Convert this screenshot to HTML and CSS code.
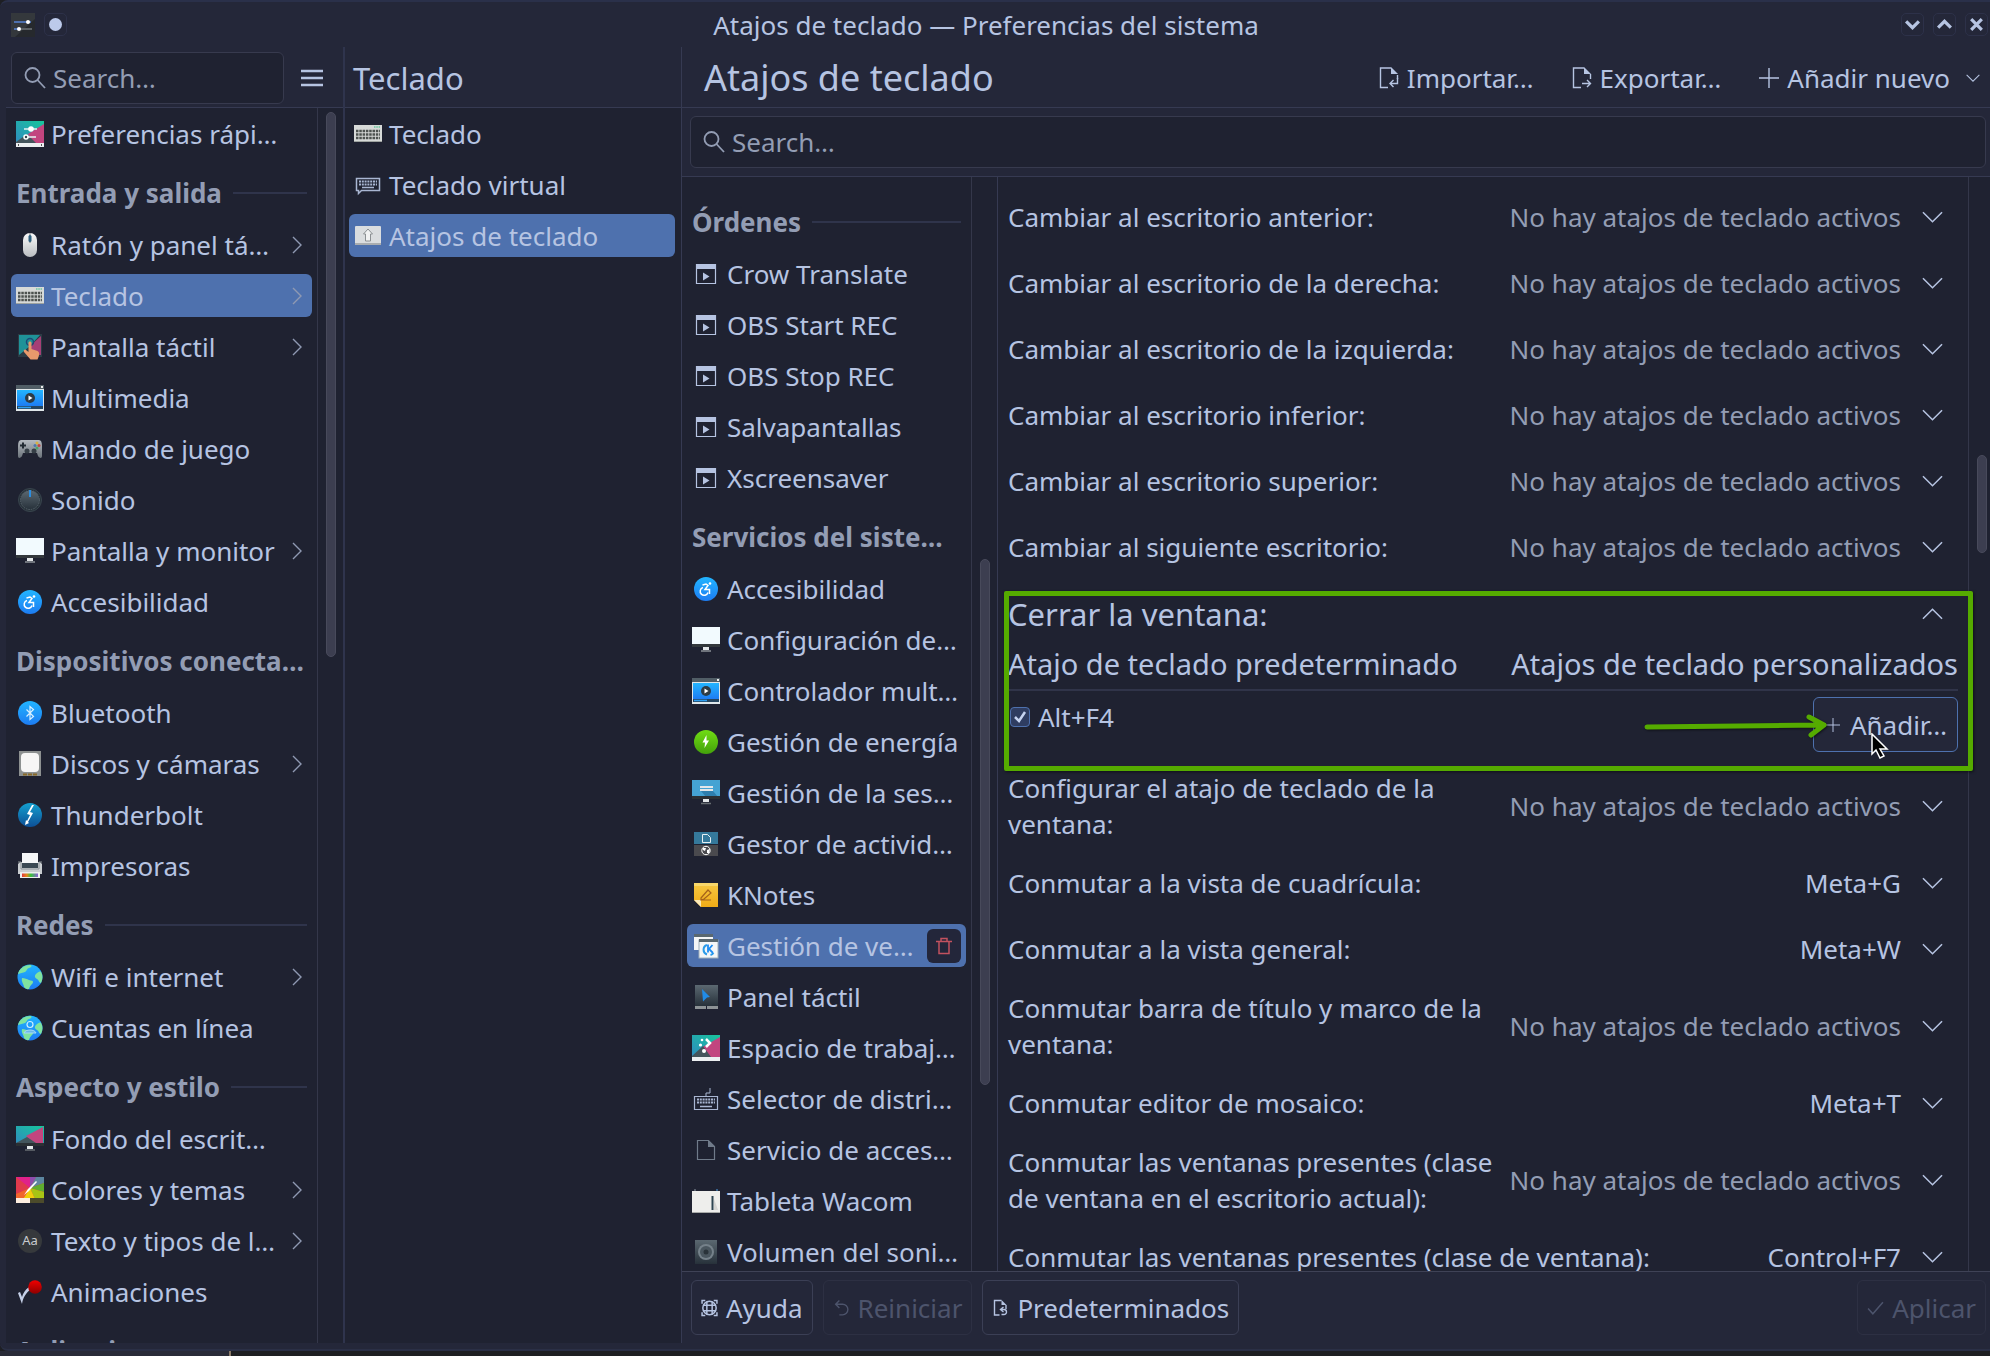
FILE: index.html
```html
<!DOCTYPE html>
<html lang="es">
<head>
<meta charset="utf-8">
<title>Atajos de teclado — Preferencias del sistema</title>
<link rel="stylesheet" href="styles.css">
</head>
<body>
<svg class="sprite" aria-hidden="true">
  <defs>
    <linearGradient id="g-blue" x1="0" y1="0" x2="0" y2="1"><stop offset="0" stop-color="#22b5ff"/><stop offset="1" stop-color="#1d7cf2"/></linearGradient>
    <linearGradient id="g-thunder" x1="0" y1="0" x2="0" y2="1"><stop offset="0" stop-color="#14a0cf"/><stop offset="1" stop-color="#0d4f96"/></linearGradient>
    <linearGradient id="g-green" x1="0" y1="0" x2="0" y2="1"><stop offset="0" stop-color="#70dc14"/><stop offset="1" stop-color="#43a10b"/></linearGradient>
    <linearGradient id="g-red" x1="0" y1="0" x2="0" y2="1"><stop offset="0" stop-color="#f20000"/><stop offset="1" stop-color="#8d0000"/></linearGradient>
    <linearGradient id="g-steel" x1="0" y1="0" x2="0" y2="1"><stop offset="0" stop-color="#5b6871"/><stop offset="1" stop-color="#27313a"/></linearGradient>
    <linearGradient id="g-silver" x1="0" y1="0" x2="0" y2="1"><stop offset="0" stop-color="#fbfbfb"/><stop offset="1" stop-color="#b9bdc0"/></linearGradient>
    <linearGradient id="g-note" x1="0" y1="0" x2="0" y2="1"><stop offset="0" stop-color="#f6c842"/><stop offset="1" stop-color="#efab17"/></linearGradient>
    <linearGradient id="g-teal" x1="0" y1="1" x2="1" y2="0"><stop offset="0" stop-color="#2f8cc0"/><stop offset="1" stop-color="#17c69b"/></linearGradient>
    <linearGradient id="g-pad" x1="0" y1="0" x2="0" y2="1"><stop offset="0" stop-color="#b4bac0"/><stop offset="1" stop-color="#6b737a"/></linearGradient>
    <linearGradient id="g-rainbow" x1="0" y1="0" x2="1" y2="0"><stop offset="0" stop-color="#e0383c"/><stop offset=".3" stop-color="#e28a1c"/><stop offset=".55" stop-color="#35c23c"/><stop offset="1" stop-color="#8e5fd8"/></linearGradient>
  </defs>
  <symbol id="i-app" viewBox="0 0 26 26"><rect x="1" y="1" width="24" height="24" fill="#34383c"/><path d="M5 25 25 7v18z" fill="#26292d"/><path d="M4 10h17" stroke="#4d70ae" stroke-width="2"/><path d="M4 17h5" stroke="#4d70ae" stroke-width="2"/><path d="M10 17h12" stroke="#5d6266" stroke-width="2"/><circle cx="18" cy="10" r="2" fill="#fff"/><circle cx="9" cy="17" r="2" fill="#fff"/></symbol>
  <symbol id="i-quick" viewBox="0 0 28 28"><rect y="1" width="28" height="22" fill="url(#g-teal)"/><path d="M28 4v19H17L12 14z" fill="#c2457f"/><path d="M0 22 11 14l9 9H0z" fill="#44555c"/><rect y="23" width="28" height="4" fill="#eceff1"/><path d="M8 9h13M8 17h12" stroke="#e7f1f2" stroke-width="1.500"/><circle cx="15" cy="9" r="2.800" fill="#fff"/><circle cx="10" cy="17" r="2" fill="#33474d" stroke="#fff" stroke-width="1.500"/><path d="M2 25h1M25 25h1" stroke="#555" stroke-width="2"/></symbol>
  <symbol id="i-mouse" viewBox="0 0 28 28"><rect x="7" y="2" width="14" height="24" rx="7" fill="url(#g-silver)"/><path d="M14 2v10" stroke="#70767b" stroke-width="1"/><rect x="12.500" y="4" width="3" height="7" rx="1.500" fill="#2d607f"/></symbol>
  <symbol id="i-keyboard" viewBox="0 0 28 28"><rect y="5" width="28" height="17" fill="#d7dad8"/><path d="M2 11h24M2 14.500h24M2 18h24" stroke="#4d524f" stroke-width="2.500" stroke-dasharray="2.500 .8"/><path d="M20 7h6" stroke="#35bd83" stroke-width="1.200" stroke-dasharray="1.500 .8"/><path d="M0 21.500h28" stroke="#9ea3a0"/></symbol>
  <symbol id="i-vkeyboard" viewBox="0 0 28 28" fill="none" stroke="#a9b6d2"><path d="M2.500 7.500h23v12h-18l-3 3v-3h-2z" stroke-width="1.500"/><path d="M5 10.500h18M5 13.500h18" stroke-width="1.800" stroke-dasharray="2 .8"/><path d="M8 16.500h12" stroke-width="1.500"/></symbol>
  <symbol id="i-shortcut" viewBox="0 0 28 28"><rect x="1" y="4" width="26" height="19" rx="1" fill="#dadddf"/><path d="M1 21h26v2H1z" fill="#a9adb0"/><path d="m14 7 4.500 5h-2v7h-5v-7h-2z" fill="#f1f2f2" stroke="#8b9093"/></symbol>
  <symbol id="i-touch" viewBox="0 0 28 28"><rect x="2" y="1" width="24" height="23" fill="#2b3b45"/><path d="M3 2h21L14 13 3 22z" fill="#1f9298"/><path d="M25 3v19H15v-10z" fill="#a53f76"/><circle cx="14" cy="9" r="3.500" fill="none" stroke="#1d4a78" stroke-width="1.500"/><path d="M12.500 10c0-2 3-2 3 0v6l6 2c2 1 2 3 1 6l-1 2.500h-7L8 19c-1-2 1-3 2-2l2.500 2z" fill="#e79a6c"/></symbol>
  <symbol id="i-media" viewBox="0 0 28 28"><rect y="1" width="28" height="26" fill="#dfe6e9"/><rect y="1" width="28" height="4" fill="#515e66"/><rect x="1" y="6" width="26" height="16" fill="url(#g-blue)"/><rect x="1" y="22" width="26" height="3" fill="#25455f"/><path d="M2 23.500h13" stroke="#2f9ff0" stroke-width="1.500"/><circle cx="14" cy="14" r="5" fill="#2d3b44"/><path d="m12.500 11.500 4 2.500-4 2.500z" fill="#fff"/><rect x="25" y="2" width="2" height="2" fill="#eee"/></symbol>
  <symbol id="i-pad" viewBox="0 0 28 28"><path d="M5 5h18c2 0 3 2 3 6v10c0 3-3 2-4 0l-1-3H7l-1 3c-1 2-4 3-4 0V11c0-4 1-6 3-6z" fill="url(#g-pad)"/><path d="M7 7.500v6M4 10.500h6" stroke="#222b33" stroke-width="2"/><circle cx="21" cy="8" r="1.500" fill="#d8b13f"/><circle cx="19" cy="10.500" r="1.500" fill="#4b77ad"/><circle cx="23" cy="10.500" r="1.500" fill="#c2443f"/><circle cx="21" cy="13" r="1.500" fill="#4fa36a"/><circle cx="11" cy="16" r="2.500" fill="#353e46"/><circle cx="18" cy="16" r="2.500" fill="#353e46"/></symbol>
  <symbol id="i-sound" viewBox="0 0 28 28"><circle cx="14" cy="14" r="11.500" fill="#28323a" stroke="#39454e"/><circle cx="14" cy="14" r="9.500" fill="url(#g-steel)" stroke="#56626b" stroke-dasharray="1.500 1"/><path d="M14 4v7" stroke="#2b8de0" stroke-width="2"/></symbol>
  <symbol id="i-monitor" viewBox="0 0 28 28"><rect y="1" width="28" height="18" fill="#f2fafe"/><rect y="18" width="28" height="3" fill="#33383c"/><path d="M11 21h6v3h-6z" fill="#e3e6e8"/><path d="M9 25h10" stroke="#8b9196" stroke-width="1.500"/></symbol>
  <symbol id="i-access" viewBox="0 0 28 28"><circle cx="14" cy="14" r="12" fill="url(#g-blue)"/><g fill="none" stroke="#fff" stroke-width="1.500"><path d="M11 12.500a4 4 0 1 0 5 5"/><path d="m10.500 10 3.500-1 2 1.500-3 4h4.500V19"/></g><circle cx="18" cy="8.500" r="1.300" fill="#fff"/></symbol>
  <symbol id="i-bt" viewBox="0 0 28 28"><circle cx="14" cy="14" r="12" fill="url(#g-blue)"/><path d="m10.500 10.500 7 7-3.500 3v-13l3.500 3-7 7" fill="none" stroke="#d9f0ff" stroke-width="1.200"/></symbol>
  <symbol id="i-disk" viewBox="0 0 28 28"><rect x="3" y="1" width="22" height="25" fill="#8d9191"/><rect x="5" y="3" width="18" height="19" rx="4" fill="#f6f6f6"/><path d="M7 24.500h14" stroke="#8a6a28" stroke-width="2" stroke-dasharray="4 1"/></symbol>
  <symbol id="i-thunder" viewBox="0 0 28 28"><circle cx="14" cy="14" r="12" fill="url(#g-thunder)"/><path d="m16 4-5 9 3 1-3 6-1-1-1 5 4-2-1-1 5-9-3-1 4-7z" fill="#fff"/></symbol>
  <symbol id="i-printer" viewBox="0 0 28 28"><path d="M2 12v10h24V12l-2-2H4z" fill="#c9cdd0"/><path d="M2 10h3v7h18v-7h3" fill="none" stroke="#8e9498"/><rect x="6" y="1" width="16" height="10" fill="#f5f6f7"/><rect x="6" y="11" width="16" height="5" fill="#3a4852"/><rect x="4" y="20" width="20" height="6" fill="#eceeef"/><rect x="6" y="21.500" width="16" height="3.500" fill="url(#g-rainbow)"/></symbol>
  <symbol id="i-globe" viewBox="0 0 28 28"><circle cx="14" cy="14" r="12.500" fill="url(#g-blue)"/><path d="M14 2c3 0 1 3-1 3s-2 3-4 4-5 1-7 2c1-5 6-9 12-9zM6 15c3 0 5 1 7 2s4 0 4 2-3 3-4 7c-2 .5-4-.5-5-2 0-3-3-5-2-9zM20 11c2-2 4-3 5-2 2 3 2 7 0 11-2 0-2-3-4-4s-3-3-1-5z" fill="#7fe3a0"/></symbol>
  <symbol id="i-accounts" viewBox="0 0 28 28"><use href="#i-globe"/><circle cx="14" cy="10.500" r="3" fill="none" stroke="#cdeeff" stroke-width="1.200"/><path d="M8 19c1-4 11-4 12 0z" fill="#6ab8e8" stroke="#a7dbfa"/></symbol>
  <symbol id="i-wallpaper" viewBox="0 0 28 28"><rect y="1" width="28" height="18" fill="url(#g-teal)"/><path d="M27 2v16H17l-7-7z" fill="#c2457f"/><path d="m0 18 11-6 9 6z" fill="#44555c"/><rect y="18" width="28" height="3" fill="#2b3034"/><path d="M11 21h6v3h-6z" fill="#e3e6e8"/><path d="M9 25h10" stroke="#676d72" stroke-width="1.500"/></symbol>
  <symbol id="i-colors" viewBox="0 0 28 28"><rect y="1" width="28" height="22" fill="#e03a4c"/><path d="M0 1h14v11z" fill="#e0218a"/><path d="M14 1h6l-6 11z" fill="#8d4cae"/><path d="M20 1h8v6l-14 5z" fill="#5c86a0"/><path d="M28 7v9l-14-4z" fill="#5fae2f"/><path d="M28 16v7h-9l-5-11z" fill="#a8c414"/><path d="M19 23H7l7-11z" fill="#f0cf0c"/><path d="M7 23H0v-5l14-6z" fill="#f0662c"/><rect y="22" width="14" height="5" fill="#fdeee0"/><rect x="14" y="22" width="14" height="5" fill="#4c4b2b"/><path d="m8 19 4-6 8-8 1 1-8 9z" fill="#fff"/></symbol>
  <symbol id="i-fonts" viewBox="0 0 28 28"><circle cx="14" cy="14" r="12" fill="#36393c"/><text x="14" y="18" text-anchor="middle" font-family="Noto Sans, sans-serif" font-size="13" fill="#c9cccf">Aa</text></symbol>
  <symbol id="i-anim" viewBox="0 0 28 28"><path d="m2 15 4 11c1-7 4-11 9-15l-2-2c-4 3-6 6-7 10l-2-5z" fill="#c5d0e8"/><circle cx="19" cy="9" r="6.800" fill="url(#g-red)"/></symbol>
  <symbol id="i-cmd" viewBox="0 0 28 28"><path d="M4 4h20v5H4z" fill="#b6c4e2"/><path d="M4.500 4.500h19v19h-19z" fill="none" stroke="#b6c4e2" stroke-width="1.200"/><path d="m11 12.500 6.500 4-6.500 4z" fill="#b6c4e2"/></symbol>
  <symbol id="i-energy" viewBox="0 0 28 28"><circle cx="14" cy="14" r="12" fill="url(#g-green)"/><path d="m14.500 7-4 7.500H13l-.5 5.500 4.500-7.500h-2.500z" fill="#fff"/></symbol>
  <symbol id="i-session" viewBox="0 0 28 28"><rect y="1" width="28" height="17" fill="#45a3d3"/><path d="M9 12h12l5 6H14z" fill="#2e7fae"/><path d="M8 7h13v2H8zM8 10h13v2H8z" fill="#e2e7ea"/><rect y="17" width="28" height="3" fill="#2b3034"/><path d="M11 20h6v3h-6z" fill="#e3e6e8"/><path d="M9 24.500h10" stroke="#676d72" stroke-width="1.500"/></symbol>
  <symbol id="i-activity" viewBox="0 0 28 28"><rect x="2" y="2" width="24" height="12" fill="#35799b"/><rect x="2" y="15" width="24" height="11" fill="#4a4a4e"/><path d="M10.500 4.500h5l3 3v5h-8z" fill="none" stroke="#e7f0f4"/><circle cx="14" cy="20.500" r="4.200" fill="none" stroke="#fff"/><path d="M11 18h3l-1 3-2-1zM15 20l3-1-1 4h-2z" fill="#fff"/></symbol>
  <symbol id="i-notes" viewBox="0 0 28 28"><path d="M2 2h24v24H9l-7-7z" fill="url(#g-note)"/><path d="M2 2h24v3H2z" fill="#f8d76a"/><path d="M2 19h7v7z" fill="#fbe9b8"/><path d="m9 17 7-8 3 3-7 6-3 1zM9 19h10" fill="none" stroke="#a5621a" stroke-width="1.200"/></symbol>
  <symbol id="i-windows" viewBox="0 0 28 28"><rect x="2" y="2" width="19" height="16" fill="#f4f6f7"/><rect x="2" y="2" width="19" height="3" fill="#5a6870"/><rect x="7" y="8" width="19" height="18" fill="#f4f6f7" stroke="#9fb0bc"/><rect x="7" y="7" width="19" height="3" fill="#5a6870"/><path d="M15 13a5 5 0 0 0 0 9.500M18.500 23a5 5 0 0 0 3-2" fill="none" stroke="#2a9be8" stroke-width="2"/><path d="M16 12.500v8M20.500 13 17 17l4 4" stroke="#1d8cf2" stroke-width="1.800" fill="none"/></symbol>
  <symbol id="i-touchpad" viewBox="0 0 28 28"><rect x="3" y="2" width="23" height="21" fill="url(#g-steel)"/><path d="M3 23h11v3H3zM15 23h11v3H15z" fill="#8d9396"/><path d="m10 6 8 8-3 .5-4 4-.5-6z" fill="#218be6"/></symbol>
  <symbol id="i-workspace" viewBox="0 0 28 28"><rect y="1" width="28" height="22" fill="url(#g-teal)"/><path d="M28 3v20H17L9 14z" fill="#c2457f"/><path d="M0 22 11 12l8 11H0z" fill="#44555c"/><rect y="23" width="28" height="4" fill="#eceff1"/><path d="m14 5 4 4-4 4" fill="none" stroke="#fff" stroke-width="2.500"/><circle cx="10" cy="6" r="1.300" fill="#fff"/><circle cx="8.500" cy="11" r="1.600" fill="#fff"/><circle cx="12" cy="17" r="2" fill="#fff"/></symbol>
  <symbol id="i-layout" viewBox="0 0 28 28" fill="none" stroke="#a9b6d2"><path d="M2.500 11.500h23v13h-23z" stroke-width="1.200"/><path d="M5 14.500h18M5 17.500h18" stroke-width="1.800" stroke-dasharray="2 .8"/><path d="M8 21.500h12" stroke-width="1.500"/><path d="M14 11V8h4V3"/></symbol>
  <symbol id="i-doc" viewBox="0 0 28 28"><path d="M5.500 4.500h11l6 6v13h-17z" fill="none" stroke="#707b8a" stroke-width="1.200"/><path d="M16 4v7h7z" fill="#707b8a"/></symbol>
  <symbol id="i-tablet" viewBox="0 0 28 28"><rect y="4" width="28" height="22" fill="#eeeeec"/><path d="M0 25h28v1H0z" fill="#a9aba9"/><circle cx="3" cy="3" r="1" fill="#68707d"/><circle cx="25" cy="3" r="1" fill="#3f76a8"/><path d="M20.500 9v14" stroke="#2e4552" stroke-width="2"/><path d="m22 12 4 11h-4z" fill="#d5d5d3"/></symbol>
  <symbol id="i-speaker" viewBox="0 0 28 28"><rect x="3" y="2" width="22" height="24" fill="url(#g-steel)"/><circle cx="14" cy="14" r="8" fill="#75818a"/><circle cx="14" cy="14" r="6" fill="#4a565f"/><circle cx="14" cy="14" r="2.500" fill="#2a333a"/></symbol>
  <symbol id="i-search" viewBox="0 0 24 24"><g fill="none" stroke="currentColor" stroke-width="1.800"><circle cx="9.500" cy="9" r="7"/><path d="m14.500 14 7.500 8"/></g></symbol>
  <symbol id="i-menu" viewBox="0 0 22 18"><path d="M0 2h22M0 9h22M0 16h22" stroke="currentColor" stroke-width="2.500"/></symbol>
  <symbol id="i-right" viewBox="0 0 10 18"><path d="m1 1 8 8-8 8" fill="none" stroke="currentColor" stroke-width="1.400"/></symbol>
  <symbol id="i-down" viewBox="0 0 22 12"><path d="m1 1 10 10L21 1" fill="none" stroke="currentColor" stroke-width="1.600"/></symbol>
  <symbol id="i-up" viewBox="0 0 22 12"><path d="M1 11 11 1l10 10" fill="none" stroke="currentColor" stroke-width="1.600"/></symbol>
  <symbol id="i-import" viewBox="0 0 20 24"><path d="M12 2H1.500v19.500H9M18.500 9v4" fill="none" stroke="currentColor" stroke-width="1.400"/><path d="M12 1v7h7z" fill="currentColor"/><path d="M18.500 12v5.500H11M14.500 14 11 17.500l3.500 3.500" fill="none" stroke="currentColor" stroke-width="1.400"/></symbol>
  <symbol id="i-export" viewBox="0 0 20 24"><path d="M12 2H1.500v19.500H9M18.500 8v5" fill="none" stroke="currentColor" stroke-width="1.400"/><path d="M12 1v7h7z" fill="currentColor"/><path d="M10 17.500h8.500M15 14l3.500 3.500L15 21" fill="none" stroke="currentColor" stroke-width="1.400"/></symbol>
  <symbol id="i-plus" viewBox="0 0 20 20"><path d="M10 0v20M0 10h20" stroke="currentColor" stroke-width="1.400"/></symbol>
  <symbol id="i-trash" viewBox="0 0 16 18" ><path d="M0 4.500h16M5 4V1.500h6V4M3 5v11.500h10V5" fill="none" stroke="currentColor" stroke-width="1.500"/></symbol>
  <symbol id="i-help" viewBox="0 0 16 16"><g fill="none" stroke="currentColor" stroke-width="1.400"><circle cx="8" cy="8" r="6.300"/><path d="M5.500 2v12M10.500 2v12M2 5.500h12M2 10.500h12"/><path d="M1 4V1h3M12 1h3v3M15 12v3h-3M4 15H1v-3"/></g></symbol>
  <symbol id="i-undo" viewBox="0 0 16 16"><path d="M6 1 2.500 4.500 6 8M3 4.500h6a5 5 0 0 1 0 10H6" fill="none" stroke="currentColor" stroke-width="1.300"/></symbol>
  <symbol id="i-default" viewBox="0 0 16 18"><path d="M9 1.500H2v14.500h5M13.500 6v4" fill="none" stroke="currentColor" stroke-width="1.400"/><path d="M9 1v5h5z" fill="currentColor"/><path d="M11 8 8 10.500l3 2.500M8.500 10.500h3a2.500 2.500 0 0 1 0 5H9" fill="none" stroke="currentColor" stroke-width="1.400"/></symbol>
  <symbol id="i-check" viewBox="0 0 16 14"><path d="m1 7.500 4.500 5L15 1.500" fill="none" stroke="currentColor" stroke-width="1.400"/></symbol>
</svg>

<div class="window">
  <header class="titlebar">
    <div class="titlebar-side">
      <svg class="app-icon"><use href="#i-app"/></svg>
      <button class="win-btn" aria-label="Fijar"><span class="dot"></span></button>
    </div>
    <h1 class="window-title">Atajos de teclado — Preferencias del sistema</h1>
    <div class="titlebar-side titlebar-end">
      <button class="win-btn" aria-label="Minimizar"><svg viewBox="0 0 16 16"><path d="m2 5 6 6 6-6"/></svg></button>
      <button class="win-btn" aria-label="Maximizar"><svg viewBox="0 0 16 16"><path d="m2 11 6-6 6 6"/></svg></button>
      <button class="win-btn" aria-label="Cerrar"><svg viewBox="0 0 16 16"><path d="m3 3 10 10M13 3 3 13"/></svg></button>
    </div>
  </header>

  <div class="panes">
    <section class="sidebar">
      <div class="pane-head sidebar-head">
        <label class="search"><svg class="search-icon"><use href="#i-search"/></svg><input type="text" placeholder="Search…" aria-label="Buscar"></label>
        <button class="menu-btn" aria-label="Menú"><svg><use href="#i-menu"/></svg></button>
      </div>
      <div class="scroll-pane">
        <nav class="list">
          <a class="item" href="#"><svg class="icon"><use href="#i-quick"/></svg><span>Preferencias rápi…</span></a>
          <h2 class="group">Entrada y salida</h2>
          <a class="item" href="#"><svg class="icon"><use href="#i-mouse"/></svg><span>Ratón y panel tá…</span><svg class="more"><use href="#i-right"/></svg></a>
          <a class="item selected" href="#"><svg class="icon"><use href="#i-keyboard"/></svg><span>Teclado</span><svg class="more"><use href="#i-right"/></svg></a>
          <a class="item" href="#"><svg class="icon"><use href="#i-touch"/></svg><span>Pantalla táctil</span><svg class="more"><use href="#i-right"/></svg></a>
          <a class="item" href="#"><svg class="icon"><use href="#i-media"/></svg><span>Multimedia</span></a>
          <a class="item" href="#"><svg class="icon"><use href="#i-pad"/></svg><span>Mando de juego</span></a>
          <a class="item" href="#"><svg class="icon"><use href="#i-sound"/></svg><span>Sonido</span></a>
          <a class="item" href="#"><svg class="icon"><use href="#i-monitor"/></svg><span>Pantalla y monitor</span><svg class="more"><use href="#i-right"/></svg></a>
          <a class="item" href="#"><svg class="icon"><use href="#i-access"/></svg><span>Accesibilidad</span></a>
          <h2 class="group full">Dispositivos conecta…</h2>
          <a class="item" href="#"><svg class="icon"><use href="#i-bt"/></svg><span>Bluetooth</span></a>
          <a class="item" href="#"><svg class="icon"><use href="#i-disk"/></svg><span>Discos y cámaras</span><svg class="more"><use href="#i-right"/></svg></a>
          <a class="item" href="#"><svg class="icon"><use href="#i-thunder"/></svg><span>Thunderbolt</span></a>
          <a class="item" href="#"><svg class="icon"><use href="#i-printer"/></svg><span>Impresoras</span></a>
          <h2 class="group">Redes</h2>
          <a class="item" href="#"><svg class="icon"><use href="#i-globe"/></svg><span>Wifi e internet</span><svg class="more"><use href="#i-right"/></svg></a>
          <a class="item" href="#"><svg class="icon"><use href="#i-accounts"/></svg><span>Cuentas en línea</span></a>
          <h2 class="group">Aspecto y estilo</h2>
          <a class="item" href="#"><svg class="icon"><use href="#i-wallpaper"/></svg><span>Fondo del escrit…</span></a>
          <a class="item" href="#"><svg class="icon"><use href="#i-colors"/></svg><span>Colores y temas</span><svg class="more"><use href="#i-right"/></svg></a>
          <a class="item" href="#"><svg class="icon"><use href="#i-fonts"/></svg><span>Texto y tipos de l…</span><svg class="more"><use href="#i-right"/></svg></a>
          <a class="item" href="#"><svg class="icon"><use href="#i-anim"/></svg><span>Animaciones</span></a>
          <h2 class="group full">Aplicaciones y vent…</h2>
        </nav>
        <div class="track"><div class="thumb thumb-sidebar"></div></div>
      </div>
    </section>

    <section class="modules">
      <div class="pane-head modules-head"><h2 class="pane-title">Teclado</h2></div>
      <nav class="list">
        <a class="item" href="#"><svg class="icon"><use href="#i-keyboard"/></svg><span>Teclado</span></a>
        <a class="item" href="#"><svg class="icon"><use href="#i-vkeyboard"/></svg><span>Teclado virtual</span></a>
        <a class="item selected" href="#"><svg class="icon"><use href="#i-shortcut"/></svg><span>Atajos de teclado</span></a>
      </nav>
    </section>

    <main class="detail">
      <div class="pane-head detail-head">
        <h2 class="page-title">Atajos de teclado</h2>
        <div class="actions">
          <button class="action"><svg class="doc-icon"><use href="#i-import"/></svg>Importar…</button>
          <button class="action"><svg class="doc-icon"><use href="#i-export"/></svg>Exportar…</button>
          <button class="action"><svg class="plus-icon"><use href="#i-plus"/></svg>Añadir nuevo<svg class="drop-icon"><use href="#i-down"/></svg></button>
        </div>
      </div>
      <div class="search-bar">
        <label class="search"><svg class="search-icon"><use href="#i-search"/></svg><input type="text" placeholder="Search…" aria-label="Buscar atajos"></label>
      </div>
      <div class="content">
        <div class="scroll-pane components">
          <nav class="list">
            <h3 class="group">Órdenes</h3>
            <a class="item" href="#"><svg class="icon"><use href="#i-cmd"/></svg><span>Crow Translate</span></a>
            <a class="item" href="#"><svg class="icon"><use href="#i-cmd"/></svg><span>OBS Start REC</span></a>
            <a class="item" href="#"><svg class="icon"><use href="#i-cmd"/></svg><span>OBS Stop REC</span></a>
            <a class="item" href="#"><svg class="icon"><use href="#i-cmd"/></svg><span>Salvapantallas</span></a>
            <a class="item" href="#"><svg class="icon"><use href="#i-cmd"/></svg><span>Xscreensaver</span></a>
            <h3 class="group full">Servicios del siste…</h3>
            <a class="item" href="#"><svg class="icon"><use href="#i-access"/></svg><span>Accesibilidad</span></a>
            <a class="item" href="#"><svg class="icon"><use href="#i-monitor"/></svg><span>Configuración de…</span></a>
            <a class="item" href="#"><svg class="icon"><use href="#i-media"/></svg><span>Controlador mult…</span></a>
            <a class="item" href="#"><svg class="icon"><use href="#i-energy"/></svg><span>Gestión de energía</span></a>
            <a class="item" href="#"><svg class="icon"><use href="#i-session"/></svg><span>Gestión de la ses…</span></a>
            <a class="item" href="#"><svg class="icon"><use href="#i-activity"/></svg><span>Gestor de activid…</span></a>
            <a class="item" href="#"><svg class="icon"><use href="#i-notes"/></svg><span>KNotes</span></a>
            <div class="item selected"><svg class="icon"><use href="#i-windows"/></svg><a href="#">Gestión de ve…</a><button class="delete" aria-label="Eliminar"><svg><use href="#i-trash"/></svg></button></div>
            <a class="item" href="#"><svg class="icon"><use href="#i-touchpad"/></svg><span>Panel táctil</span></a>
            <a class="item" href="#"><svg class="icon"><use href="#i-workspace"/></svg><span>Espacio de trabaj…</span></a>
            <a class="item" href="#"><svg class="icon"><use href="#i-layout"/></svg><span>Selector de distri…</span></a>
            <a class="item" href="#"><svg class="icon"><use href="#i-doc"/></svg><span>Servicio de acces…</span></a>
            <a class="item" href="#"><svg class="icon"><use href="#i-tablet"/></svg><span>Tableta Wacom</span></a>
            <a class="item" href="#"><svg class="icon"><use href="#i-speaker"/></svg><span>Volumen del soni…</span></a>
          </nav>
          <div class="track"><div class="thumb thumb-components"></div></div>
        </div>

        <div class="scroll-pane shortcuts">
          <div class="rows">
            <div class="row"><span class="name">Cambiar al escritorio anterior:</span><span class="none">No hay atajos de teclado activos</span><button class="toggle" aria-label="Desplegar"><svg><use href="#i-down"/></svg></button></div>
            <div class="row"><span class="name">Cambiar al escritorio de la derecha:</span><span class="none">No hay atajos de teclado activos</span><button class="toggle" aria-label="Desplegar"><svg><use href="#i-down"/></svg></button></div>
            <div class="row"><span class="name">Cambiar al escritorio de la izquierda:</span><span class="none">No hay atajos de teclado activos</span><button class="toggle" aria-label="Desplegar"><svg><use href="#i-down"/></svg></button></div>
            <div class="row"><span class="name">Cambiar al escritorio inferior:</span><span class="none">No hay atajos de teclado activos</span><button class="toggle" aria-label="Desplegar"><svg><use href="#i-down"/></svg></button></div>
            <div class="row"><span class="name">Cambiar al escritorio superior:</span><span class="none">No hay atajos de teclado activos</span><button class="toggle" aria-label="Desplegar"><svg><use href="#i-down"/></svg></button></div>
            <div class="row"><span class="name">Cambiar al siguiente escritorio:</span><span class="none">No hay atajos de teclado activos</span><button class="toggle" aria-label="Desplegar"><svg><use href="#i-down"/></svg></button></div>
            <div class="expanded">
              <div class="expanded-head"><span class="name">Cerrar la ventana:</span><button class="toggle" aria-label="Plegar"><svg><use href="#i-up"/></svg></button></div>
              <div class="expanded-cols"><span>Atajo de teclado predeterminado</span><span>Atajos de teclado personalizados</span></div>
              <div class="expanded-body">
                <label class="check"><input type="checkbox" checked>Alt+F4</label>
                <button class="add"><svg><use href="#i-plus"/></svg>Añadir…</button>
              </div>
              <div class="mark"></div>
              <svg class="mark-arrow" viewBox="0 0 186 24"><path d="M4 13 181 11M166 3l15 8-13 10" fill="none" stroke="#55ab00" stroke-width="5" stroke-linecap="round" stroke-linejoin="round"/></svg>
              <svg class="pointer" viewBox="0 0 18 26"><path d="M1 1v20l4-4 4 8 4-2-4-7h7z" fill="#000" stroke="#fff" stroke-width="1.500"/></svg>
            </div>
            <div class="row"><span class="name">Configurar el atajo de teclado de la ventana:</span><span class="none">No hay atajos de teclado activos</span><button class="toggle" aria-label="Desplegar"><svg><use href="#i-down"/></svg></button></div>
            <div class="row"><span class="name">Conmutar a la vista de cuadrícula:</span><span class="keys">Meta+G</span><button class="toggle" aria-label="Desplegar"><svg><use href="#i-down"/></svg></button></div>
            <div class="row"><span class="name">Conmutar a la vista general:</span><span class="keys">Meta+W</span><button class="toggle" aria-label="Desplegar"><svg><use href="#i-down"/></svg></button></div>
            <div class="row"><span class="name">Conmutar barra de título y marco de la ventana:</span><span class="none">No hay atajos de teclado activos</span><button class="toggle" aria-label="Desplegar"><svg><use href="#i-down"/></svg></button></div>
            <div class="row"><span class="name">Conmutar editor de mosaico:</span><span class="keys">Meta+T</span><button class="toggle" aria-label="Desplegar"><svg><use href="#i-down"/></svg></button></div>
            <div class="row"><span class="name">Conmutar las ventanas presentes (clase de ventana en el escritorio actual):</span><span class="none">No hay atajos de teclado activos</span><button class="toggle" aria-label="Desplegar"><svg><use href="#i-down"/></svg></button></div>
            <div class="row"><span class="name">Conmutar las ventanas presentes (clase de ventana):</span><span class="keys">Control+F7</span><button class="toggle" aria-label="Desplegar"><svg><use href="#i-down"/></svg></button></div>
          </div>
          <div class="track"><div class="thumb thumb-shortcuts"></div></div>
        </div>
      </div>
      <footer class="footer">
        <button class="btn"><svg><use href="#i-help"/></svg>Ayuda</button>
        <button class="btn" disabled><svg><use href="#i-undo"/></svg>Reiniciar</button>
        <button class="btn"><svg><use href="#i-default"/></svg>Predeterminados</button>
        <button class="btn apply" disabled><svg><use href="#i-check"/></svg>Aplicar</button>
      </footer>
    </main>
  </div>
</div>
<div class="desktop"></div>
</body>
</html>
```
FILE: styles.css
```css
:root {
  --bar: #242739;
  --view: #1f2231;
  --line: #363a52;
  --text: #b6c4e2;
  --muted: #939db4;
  --accent: #4e71ae;
}

* { box-sizing: border-box; }

body {
  margin: 0;
  height: 100vh;
  display: flex;
  flex-direction: column;
  overflow: hidden;
  background: #1e1f24;
  color: var(--text);
  font: 26px/36px "Noto Sans", sans-serif;
}

button, input {
  font: inherit;
  color: inherit;
  background: none;
  border: 0;
  padding: 0;
  margin: 0;
}

a { color: inherit; text-decoration: none; }
h1, h2, h3 { margin: 0; font-weight: 400; }
svg { display: block; flex: none; }
.sprite { position: absolute; width: 0; height: 0; }

.window {
  flex: 1;
  min-height: 0;
  display: flex;
  flex-direction: column;
  background: var(--bar);
  border-top: 2px solid #2a304a;
  border-bottom: 2px solid #2a2f45;
  border-radius: 8px 0 0 8px;
  padding: 0 0 6px 6px;
}

.desktop {
  height: 5px;
  flex: none;
  background: linear-gradient(90deg, #292b38 229px, #8a7a68 229px, #8a7a68 231px, #1e1f22 231px);
}

/* Title bar */
.titlebar {
  height: 45px;
  flex: none;
  display: flex;
  align-items: center;
}
.titlebar-side { flex: 1; display: flex; align-items: center; gap: 8px; padding: 0 4px; }
.titlebar-end { justify-content: flex-end; gap: 9px; padding: 0 2px; }
.app-icon { width: 26px; height: 26px; }
.window-title { font-size: 26px; padding-right: 28px; }
.win-btn {
  width: 23px;
  height: 23px;
  display: grid;
  place-items: center;
  border: 1px solid #2d3149;
  border-radius: 5px;
}
.win-btn svg { width: 17px; height: 17px; fill: none; stroke: var(--text); stroke-width: 3; }
.dot { width: 13px; height: 13px; border-radius: 50%; background: #bccaea; }

/* Panes */
.panes { flex: 1; min-height: 0; display: flex; }
.sidebar, .modules, .detail { display: flex; flex-direction: column; min-height: 0; }
.sidebar { width: 339px; flex: none; border-right: 2px solid #2f344d; }
.modules { width: 337px; flex: none; border-right: 1px solid var(--line); background: var(--view); }
.detail { flex: 1; min-width: 0; }

.pane-head {
  height: 61px;
  flex: none;
  display: flex;
  align-items: center;
  padding-top: 2px;
  background: var(--bar);
  border-bottom: 1px solid var(--line);
}
.sidebar-head { padding-left: 5px; padding-right: 20px; gap: 17px; }
.modules-head { padding-left: 8px; }
.pane-title { font-size: 31px; }
.page-title { font-size: 36px; line-height: 50px; }
.detail-head { padding-left: 22px; padding-right: 10px; justify-content: space-between; }

.search {
  flex: 1;
  min-width: 0;
  height: 52px;
  display: flex;
  align-items: center;
  gap: 6px;
  padding: 0 11px;
  background: var(--view);
  border: 1px solid #373a4e;
  border-radius: 6px;
  color: var(--muted);
}
.search input { flex: 1; min-width: 0; outline: 0; }
.search input::placeholder { color: var(--muted); opacity: 1; }
.search-icon { width: 24px; height: 24px; }
.menu-btn svg { width: 22px; height: 18px; }

.actions { display: flex; gap: 38px; }
.action { display: flex; align-items: center; gap: 8px; }
.doc-icon { width: 20px; height: 24px; }
.plus-icon { width: 20px; height: 20px; }
.drop-icon { width: 14px; height: 8px; margin-left: 8px; }

.search-bar { flex: none; display: flex; padding: 8px 4px 8px 8px; border-bottom: 1px solid var(--line); }

/* Lists */
.scroll-pane { flex: 1; min-height: 0; display: flex; background: var(--view); }
.list {
  flex: 1;
  min-width: 0;
  display: flex;
  flex-direction: column;
  overflow: hidden;
  padding: 0 5px;
}
.list > * { flex: none; }
.scroll-pane > .list { border-right: 1px solid #34374a; }
.modules .list { padding: 0 6px 0 4px; }
.item {
  height: 43px;
  margin: 4px 0;
  display: flex;
  align-items: center;
  gap: 7px;
  padding: 0 10px 0 5px;
  border-radius: 6px;
  white-space: nowrap;
}
.item.selected { background: var(--accent); }
.icon { width: 28px; height: 28px; }
.more { width: 10px; height: 18px; margin-left: auto; color: #8f99b2; }
.group {
  height: 60px;
  display: flex;
  align-items: center;
  gap: 11px;
  padding: 8px 5px 0 5px;
  font-size: 26px;
  font-weight: 700;
  color: var(--muted);
  white-space: nowrap;
}
.item + .group, .group + .item { margin-top: 0; }
.item:has(+ .group) { margin-bottom: 4px; }
.item + .item { margin-top: 4px; }
.group::after { content: ""; flex: 1; height: 2px; background: #2f344b; }
.group.full::after { display: none; }
.group + .item { margin-top: 4px; }

.track { width: 25px; flex: none; display: flex; justify-content: center; }
.thumb { width: 10px; border-radius: 5px; background: #3c3e50; border: 1px solid #484a5b; }
.thumb-sidebar { height: 545px; margin-top: 4px; }
.thumb-components { height: 526px; margin-top: 382px; }
.thumb-shortcuts { height: 98px; margin-top: 278px; }

.delete {
  width: 34px;
  height: 34px;
  margin-left: auto;
  display: grid;
  place-items: center;
  background: #23263a;
  border-radius: 6px;
  color: #c2525f;
}
.delete svg { width: 16px; height: 18px; }

/* Shortcuts */
.content { flex: 1; min-height: 0; display: flex; }
.components { width: 316px; flex: none; border-right: 1px solid var(--line); }
.components .list { padding-top: 11px; }
.components .item { padding-right: 5px; }
.shortcuts { overflow: hidden; }
.shortcuts .track { width: 21px; justify-content: flex-end; padding-right: 3px; }
.rows { flex: 1; min-width: 0; padding-top: 7px; border-right: 1px solid #34374a; }
.row {
  min-height: 66px;
  display: flex;
  align-items: center;
  gap: 10px;
  padding: 8px 15px 8px 10px;
}
.name { flex: 1; min-width: 0; }
.none { color: var(--muted); white-space: nowrap; }
.toggle { width: 42px; height: 36px; flex: none; display: grid; place-items: center; }
.toggle svg { width: 21px; height: 12px; }

.expanded { position: relative; height: 182px; padding: 14px 10px 0; }
.expanded-head { display: flex; align-items: center; padding-right: 5px; font-size: 31px; height: 40px; }
.expanded-cols {
  display: flex;
  justify-content: space-between;
  height: 57px;
  align-items: center;
  padding-top: 4px;
  font-size: 29px;
  border-bottom: 2px solid #303449;
}
.expanded-body { display: flex; justify-content: space-between; align-items: flex-start; padding-top: 6px; }
.check { display: flex; align-items: center; gap: 8px; padding: 2px 0 0 2px; }
.check input {
  appearance: none;
  width: 20px;
  height: 20px;
  border: 1px solid var(--accent);
  border-radius: 4px;
  background: #2f3d61 url("data:image/svg+xml,%3Csvg xmlns='http://www.w3.org/2000/svg' viewBox='0 0 18 18'%3E%3Cpath d='m4 9 4 4 6-9' fill='none' stroke='%23c5d3f0' stroke-width='2.500'/%3E%3C/svg%3E") center / contain no-repeat;
}
.add {
  display: flex;
  align-items: center;
  gap: 10px;
  height: 55px;
  padding: 0 10px 0 12px;
  border: 1px solid var(--accent);
  border-radius: 6px;
  background: var(--bar);
}
.add svg { width: 14px; height: 14px; }
.mark {
  position: absolute;
  inset: 11px -5px -9px 6px;
  border: 5px solid #55ab00;
  border-radius: 2px;
  box-shadow: 1px 1px 3px #0008;
  pointer-events: none;
}
.mark-arrow { position: absolute; right: 139px; top: 134px; width: 186px; height: 24px; filter: drop-shadow(1px 1px 1px #0008); }
.pointer { position: absolute; right: 79px; top: 153px; width: 18px; height: 26px; }

/* Footer */
.footer {
  height: 72px;
  flex: none;
  display: flex;
  gap: 10px;
  padding: 8px 4px 0 9px;
  background: var(--bar);
  border-top: 1px solid #3f4256;
}
.btn {
  height: 55px;
  display: flex;
  align-items: center;
  gap: 8px;
  padding: 0 9px;
  border: 1px solid #3b3f55;
  border-radius: 6px;
}
.btn svg { width: 17px; height: 18px; }
.btn:disabled { color: #4d546c; border-color: #2d3043; }
.apply { margin-left: auto; }
```
